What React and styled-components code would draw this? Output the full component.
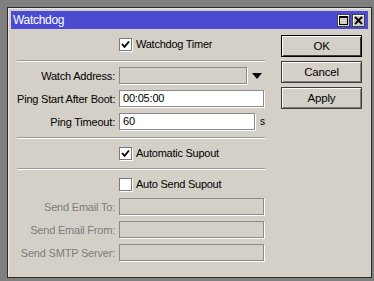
import React from "react";
import styled, { createGlobalStyle } from "styled-components";

const Global = createGlobalStyle`
  html, body { margin: 0; padding: 0; background: #7f7f7f; }
  body { width: 374px; height: 281px; overflow: hidden; font-family: "Liberation Sans", Arial, sans-serif; }
  * { box-sizing: border-box; }
`;

const Screen = styled.div`
  padding: 7px 1px 3px 7px;
  background: #7f7f7f;
  height: 281px;
`;

const Window = styled.div`
  width: 365px;
  height: 271px;
  background: #d4d0c8;
  border: 1px solid #2b2b2b;
  box-shadow: inset 1px 1px 0 #e8e6e0;
  padding: 3px 3px 3px 3px;
  display: flex;
  flex-direction: column;
`;

const TitleBar = styled.div`
  height: 18px;
  background: #4b4bd2;
  display: flex;
  align-items: center;
  justify-content: space-between;
  padding: 0 3px 0 2px;
`;

const Title = styled.span`
  color: #ffffff;
  font-size: 12px;
  letter-spacing: -0.3px;
`;

const TitleButtons = styled.div`
  display: flex;
  gap: 2px;
`;

const TitleButton = styled.div`
  width: 13px;
  height: 13px;
  background: #d4d0c8;
  border: 1px solid #404040;
  box-shadow: inset 1px 1px 0 #ffffff;
  display: flex;
  align-items: center;
  justify-content: center;
`;

const Body = styled.div`
  flex: 1;
  display: flex;
  padding-left: 6px;
`;

const Form = styled.div`
  width: 248px;
  display: flex;
  flex-direction: column;
`;

const Side = styled.div`
  margin-left: 16px;
  padding-top: 6px;
  display: flex;
  flex-direction: column;
  gap: 4px;
`;

const Button = styled.div`
  width: 81px;
  height: 22px;
  border: 1px solid ${(p) => (p.$default ? "#000" : "#3c3c3c")};
  box-shadow: ${(p) =>
    p.$default
      ? "inset 1px 1px 0 #ffffff, inset -1px -1px 0 #404040"
      : "inset 1px 1px 0 #ffffff, inset -1px -1px 0 #808080"};
  display: flex;
  align-items: center;
  justify-content: center;
  font-size: 11.5px;
  letter-spacing: -0.2px;
  color: #000;
`;

const CheckRow = styled.div`
  height: 20px;
  margin-top: ${(p) => p.$mt}px;
  display: grid;
  grid-template-columns: 98px auto;
  column-gap: 4px;
  align-items: center;
`;

const CheckLabel = styled.label`
  grid-column: 2;
  display: flex;
  align-items: center;
  gap: 4px;
  font-size: 11px;
  letter-spacing: -0.25px;
  color: #000;
`;

const Box = styled.span`
  width: 13px;
  height: 13px;
  background: #fff;
  border: 1px solid #7a7a7a;
  box-shadow: 1px 1px 0 #ffffff;
  display: flex;
  align-items: center;
  justify-content: center;
`;

const Separator = styled.div`
  margin-top: ${(p) => p.$mt}px;
  height: 2px;
  border-top: 1px solid #9c9a94;
  border-bottom: 1px solid #ffffff;
`;

const FieldRow = styled.div`
  height: 17px;
  margin-top: ${(p) => p.$mt}px;
  display: grid;
  grid-template-columns: 98px 1fr;
  column-gap: 4px;
  align-items: center;
`;

const Label = styled.span`
  text-align: right;
  font-size: 11px;
  letter-spacing: -0.2px;
  white-space: nowrap;
  color: ${(p) => (p.$disabled ? "#7c7c7c" : "#000")};
`;

const InputWrap = styled.div`
  display: flex;
  align-items: center;
`;

const Input = styled.div`
  height: 17px;
  width: ${(p) => p.$w}px;
  background: ${(p) => (p.$disabled ? "#d4d0c8" : "#ffffff")};
  border: 1px solid #8a8a8a;
  box-shadow: 1px 1px 0 #ffffff;
  font-size: 11px;
  letter-spacing: -0.2px;
  line-height: 15px;
  padding-left: 3px;
  color: #000;
`;

const Arrow = styled.span`
  margin-left: 5px;
  display: flex;
`;

const Unit = styled.span`
  margin-left: 5px;
  font-size: 10px;
  color: #000;
`;

const Check = () => (
  <svg width="9" height="9" viewBox="0 0 9 9">
    <path d="M1 4 L3.5 6.8 L8 1.5" fill="none" stroke="#000" strokeWidth="1.8" />
  </svg>
);

export default function App() {
  return (
    <>
      <Global />
      <Screen>
        <Window>
          <TitleBar>
            <Title>Watchdog</Title>
            <TitleButtons>
              <TitleButton>
                <svg width="9" height="9" viewBox="0 0 9 9">
                  <rect x="0.5" y="0.5" width="8" height="8" fill="none" stroke="#000" />
                  <rect x="0" y="0" width="9" height="2" fill="#000" />
                </svg>
              </TitleButton>
              <TitleButton>
                <svg width="9" height="9" viewBox="0 0 9 9">
                  <path d="M1 1 L8 8 M8 1 L1 8" stroke="#000" strokeWidth="2" />
                </svg>
              </TitleButton>
            </TitleButtons>
          </TitleBar>
          <Body>
            <Form>
              <CheckRow $mt={5}>
                <CheckLabel>
                  <Box><Check /></Box>
                  Watchdog Timer
                </CheckLabel>
              </CheckRow>
              <Separator $mt={6} />
              <FieldRow $mt={5}>
                <Label>Watch Address:</Label>
                <InputWrap>
                  <Input $w={128} $disabled />
                  <Arrow>
                    <svg width="10" height="6" viewBox="0 0 10 6">
                      <path d="M0 0 H10 L5 6 Z" fill="#000" />
                    </svg>
                  </Arrow>
                </InputWrap>
              </FieldRow>
              <FieldRow $mt={6}>
                <Label>Ping Start After Boot:</Label>
                <InputWrap>
                  <Input $w={145}>00:05:00</Input>
                </InputWrap>
              </FieldRow>
              <FieldRow $mt={6}>
                <Label>Ping Timeout:</Label>
                <InputWrap>
                  <Input $w={136}>60</Input>
                  <Unit>s</Unit>
                </InputWrap>
              </FieldRow>
              <Separator $mt={7} />
              <CheckRow $mt={4}>
                <CheckLabel>
                  <Box><Check /></Box>
                  Automatic Supout
                </CheckLabel>
              </CheckRow>
              <Separator $mt={5} />
              <CheckRow $mt={4}>
                <CheckLabel>
                  <Box />
                  Auto Send Supout
                </CheckLabel>
              </CheckRow>
              <FieldRow $mt={4}>
                <Label $disabled>Send Email To:</Label>
                <InputWrap>
                  <Input $w={145} $disabled />
                </InputWrap>
              </FieldRow>
              <FieldRow $mt={6}>
                <Label $disabled>Send Email From:</Label>
                <InputWrap>
                  <Input $w={145} $disabled />
                </InputWrap>
              </FieldRow>
              <FieldRow $mt={6}>
                <Label $disabled>Send SMTP Server:</Label>
                <InputWrap>
                  <Input $w={145} $disabled />
                </InputWrap>
              </FieldRow>
            </Form>
            <Side>
              <Button $default>OK</Button>
              <Button>Cancel</Button>
              <Button>Apply</Button>
            </Side>
          </Body>
        </Window>
      </Screen>
    </>
  );
}
